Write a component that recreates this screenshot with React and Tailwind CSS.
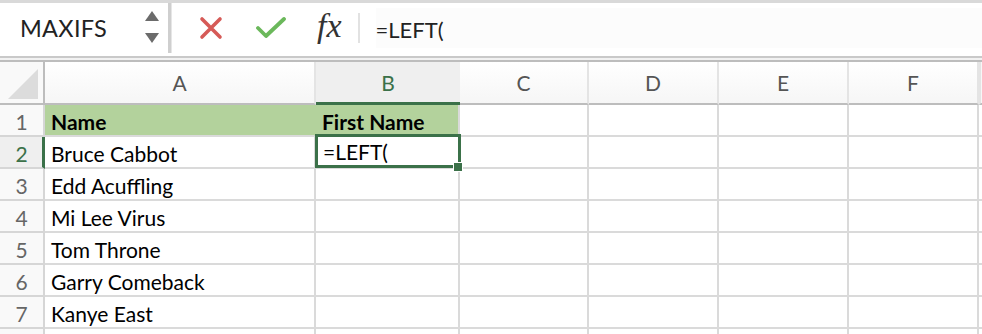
import React from "react";

const COLS = ["A", "B", "C", "D", "E", "F"];
const NAMES = [
  "Bruce Cabbot",
  "Edd Acuffling",
  "Mi Lee Virus",
  "Tom Throne",
  "Garry Comeback",
  "Kanye East",
];

function NameBoxArrows() {
  return (
    <svg width="16" height="36" viewBox="0 0 16 36" className="shrink-0">
      <path d="M8 1 L15 11 L1 11 Z" fill="#6b6b6b" />
      <path d="M1 23 L15 23 L8 33 Z" fill="#6b6b6b" />
    </svg>
  );
}

function CancelIcon() {
  return (
    <svg width="24" height="24" viewBox="0 0 24 24">
      <path d="M3 3 L21 21 M21 3 L3 21" stroke="#d65a57" strokeWidth="3.6" strokeLinecap="round" />
    </svg>
  );
}

function EnterIcon() {
  return (
    <svg width="30" height="22" viewBox="0 0 30 22">
      <path d="M2 11 L10 19 L28 2" stroke="#6bb85b" strokeWidth="3.8" fill="none" strokeLinecap="round" strokeLinejoin="round" />
    </svg>
  );
}

function Cell({ children, className = "" }) {
  return (
    <div className={`h-[32px] border-b-2 border-r-2 border-[#dadada] flex items-center pl-[6px] pt-[3px] text-[21px] text-black whitespace-nowrap ${className}`}>
      {children}
    </div>
  );
}

export default function App() {
  return (
    <div className="w-[982px] h-[334px] overflow-hidden bg-white font-['Lato',sans-serif]">
      <div className="h-[3px] bg-[#d9d9d9]" />
      <div className="flex h-[55px] pb-[3px] border-b-2 border-[#c9c9c9]">
        <div className="w-[168px] flex items-center justify-between pl-[20px] pr-[8px]">
          <span className="text-[23.5px] text-[#222] tracking-[0.3px] pt-[2px]">MAXIFS</span>
          <NameBoxArrows />
        </div>
        <div className="w-[4px] bg-[#cfcfcf] border-r border-[#e6e6e6]" />
        <div className="flex-1 flex items-center">
          <div className="ml-[27px]">
            <CancelIcon />
          </div>
          <div className="ml-[33px]">
            <EnterIcon />
          </div>
          <span className="ml-[31px] font-['Liberation_Serif',serif] italic text-[34px] text-[#333] leading-none pb-[4px]">
            fx
          </span>
          <div className="ml-[16px] w-[2px] h-[30px] bg-[#e2e2e2]" />
          <div className="ml-[16px] flex-1 h-[40px] bg-[#fcfcfc] flex items-center">
            <span className="text-[22px] text-[#222] pt-[3px]">=LEFT(</span>
          </div>
        </div>
      </div>
      <div className="h-[2px] bg-[#f2f2f2]" />
      <div className="h-[2px] bg-[#bdbdbd]" />

      <div className="grid grid-cols-[45px_271px_144px_129px_130px_130px_130px_1fr]">
        {/* header row */}
        <div className="h-[43px] border-r-2 border-b-2 border-[#bdbdbd] bg-[#f9f9f9] flex items-end justify-end pr-[5px] pb-[4px]">
          <svg width="30" height="30" viewBox="0 0 30 30">
            <path d="M30 0 L30 30 L0 30 Z" fill="#dcdcdc" />
          </svg>
        </div>
        {COLS.map((c) => (
          <div
            key={c}
            className={
              c === "B"
                ? "h-[43px] border-b-[3px] border-[#3b7149] bg-[#efefef] flex items-center justify-center text-[21px] text-[#3b7149] pt-[1px]"
                : "h-[43px] border-r-2 border-b-2 border-r-[#e4e4e4] border-b-[#bdbdbd] bg-gradient-to-b from-white to-[#f6f6f6] flex items-center justify-center text-[21px] text-[#555] pt-[1px]"
            }
          >
            {c}
          </div>
        ))}
        <div className="h-[43px] border-b-2 border-[#bdbdbd] bg-[#f7f7f7] border-l-2 border-l-[#e4e4e4]" />

        {/* row 1 */}
        <div className="h-[32px] border-r-2 border-b-2 border-[#d6d6d6] bg-[#f9f9f9] flex items-center justify-center text-[21px] text-[#666] pt-[3px]">
          1
        </div>
        <Cell className="bg-[#b3d29c] font-bold border-r-[#b3d29c]">Name</Cell>
        <Cell className="bg-[#b3d29c] font-bold border-b-0">First Name</Cell>
        <Cell />
        <Cell />
        <Cell />
        <Cell />
        <Cell className="border-r-0" />

        {/* rows 2..7 */}
        {NAMES.map((name, i) => {
          const row = i + 2;
          const selected = row === 2;
          return (
            <React.Fragment key={name}>
              <div
                className={
                  selected
                    ? "h-[32px] border-r-[3px] border-r-[#3b7149] border-b-2 border-b-[#d6d6d6] bg-[#efefef] flex items-center justify-center text-[21px] text-[#3b7149] pt-[3px] pl-[1px]"
                    : "h-[32px] border-r-2 border-b-2 border-[#d6d6d6] bg-[#f9f9f9] flex items-center justify-center text-[21px] text-[#666] pt-[3px]"
                }
              >
                {row}
              </div>
              <Cell>{name}</Cell>
              {selected ? (
                <div className="relative h-[32px] border-b-2 border-r-2 border-[#dadada]">
                  <div className="absolute -top-[3px] -left-[1px] right-[-3px] bottom-[-1px] border-[3px] border-[#3b7149] flex items-center pl-[5px] pt-[2px] text-[21px] text-black">
                    =LEFT(
                  </div>
                  <div className="absolute right-[-5px] bottom-[-5px] w-[10px] h-[10px] bg-[#3b7149] border border-white" />
                </div>
              ) : (
                <Cell />
              )}
              <Cell />
              <Cell />
              <Cell />
              <Cell />
              <Cell className="border-r-0" />
            </React.Fragment>
          );
        })}

        {/* row 8 partial */}
        <div className="h-[32px] border-r-2 border-[#d6d6d6] bg-[#f9f9f9]" />
        <div className="h-[32px] border-r-2 border-[#dadada]" />
        <div className="h-[32px] border-r-2 border-[#dadada]" />
        <div className="h-[32px] border-r-2 border-[#dadada]" />
        <div className="h-[32px] border-r-2 border-[#dadada]" />
        <div className="h-[32px] border-r-2 border-[#dadada]" />
        <div className="h-[32px] border-r-2 border-[#dadada]" />
        <div className="h-[32px]" />
      </div>
    </div>
  );
}
